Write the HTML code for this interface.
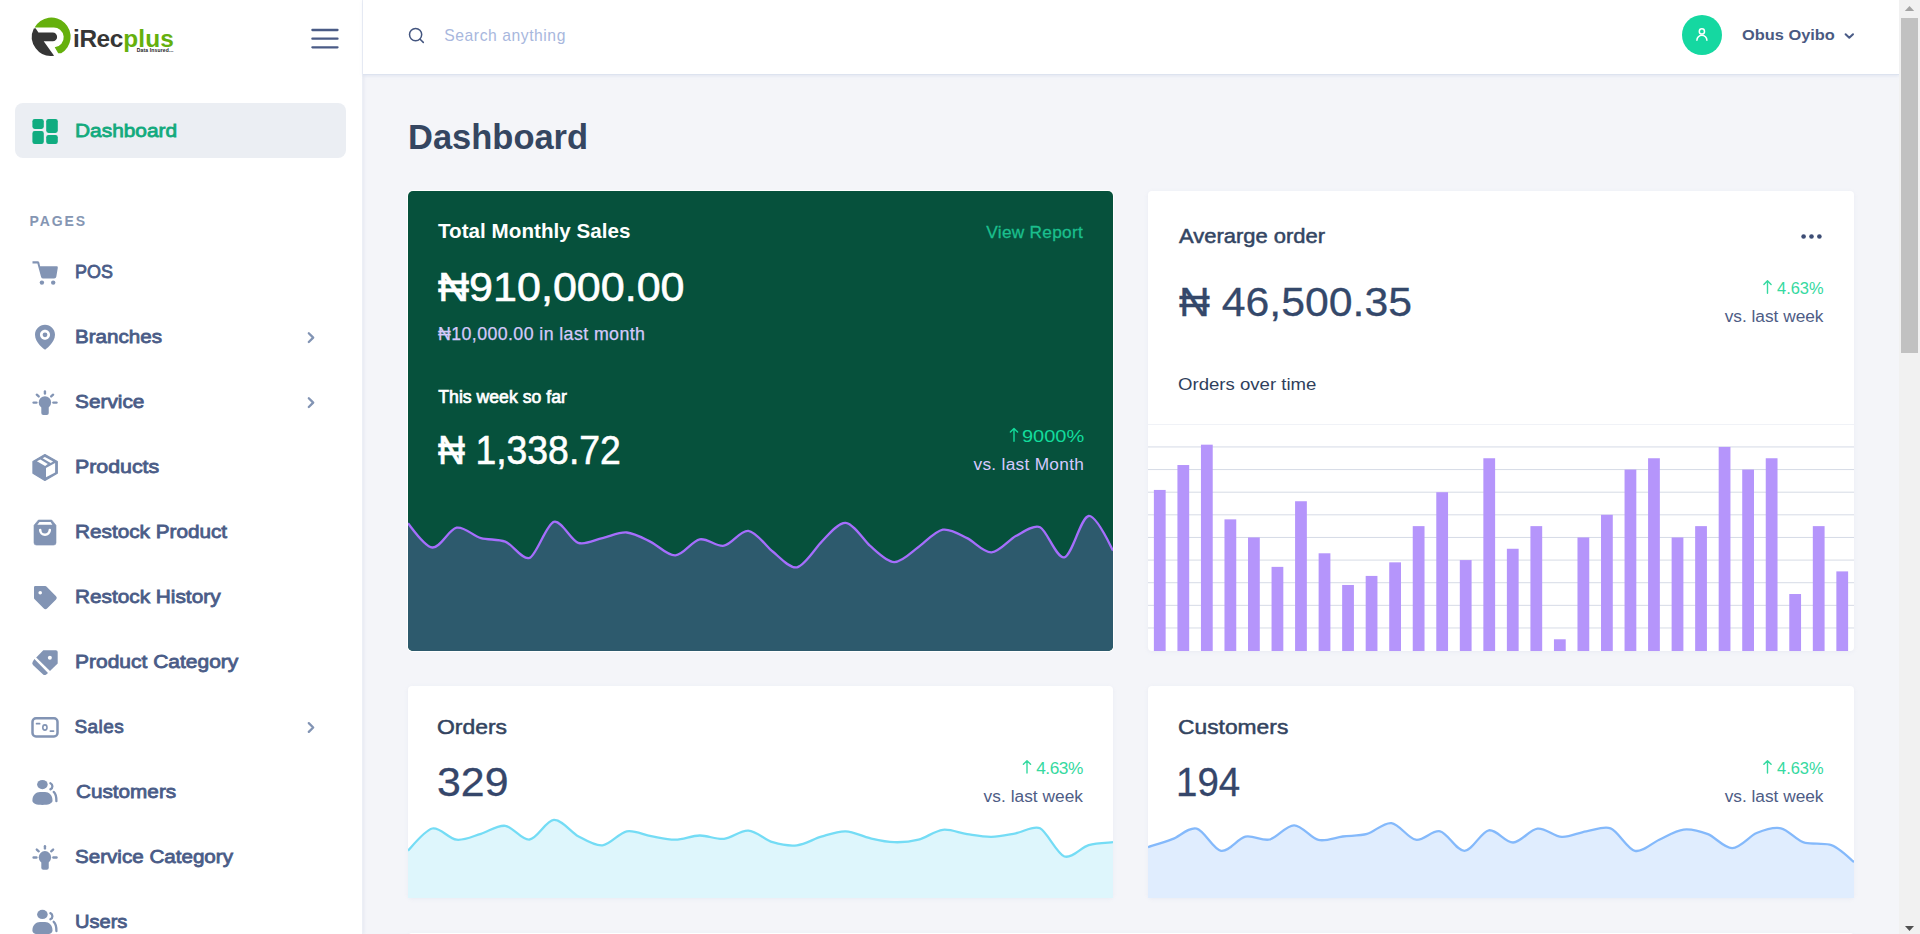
<!DOCTYPE html>
<html lang="en">
<head>
<meta charset="utf-8">
<title>iRecplus - Dashboard</title>
<style>
*{box-sizing:border-box;margin:0;padding:0}
html,body{width:1920px;height:934px;overflow:hidden}
body{font-family:"Liberation Sans",sans-serif;background:#f4f5f9;color:#334266;position:relative}
.abs{position:absolute}
.t{position:absolute;white-space:nowrap;line-height:1}
svg{position:absolute;left:0;top:0;overflow:visible}
#side{position:absolute;left:0;top:0;width:363px;height:934px;background:#fff;border-right:1px solid #eceff6;box-shadow:1px 0 3px rgba(170,182,212,.2)}
#top{position:absolute;left:363px;top:0;width:1536px;height:75px;background:#fff;border-bottom:1px solid #dde3ef;box-shadow:0 1px 3px rgba(190,200,225,.35)}
.active{position:absolute;left:15px;top:103px;width:331px;height:55px;border-radius:8px;background:#ebeef3}
.card{position:absolute;background:#fff;border-radius:4px;overflow:hidden;box-shadow:0 1px 4px rgba(150,160,195,.10)}
#sb{position:absolute;left:1899px;top:0;width:21px;height:934px;background:#f1f1f1}
#sb .th{position:absolute;left:2px;top:18px;width:17px;height:335px;background:#c1c1c1}
</style>
</head>
<body>
<!-- cards -->
<div class="card" style="left:408px;top:191px;width:705px;height:460px;background:#06513c;border-radius:5px;box-shadow:0 0 0 1px #fff"></div>
<div class="card" style="left:1148px;top:191px;width:706px;height:460px"></div>
<div class="card" style="left:408px;top:686px;width:705px;height:212px"></div>
<div class="card" style="left:1148px;top:686px;width:706px;height:212px"></div>
<div class="card" style="left:408px;top:933px;width:1446px;height:20px;border-radius:4px 4px 0 0"></div>

<!-- charts -->
<svg width="1920" height="934" viewBox="0 0 1920 934">
  <defs>
    <clipPath id="k1"><rect x="408" y="191" width="705" height="460" rx="5"/></clipPath>
    <clipPath id="k2"><rect x="1148" y="191" width="706" height="460" rx="4"/></clipPath>
    <clipPath id="k3"><rect x="408" y="686" width="705" height="212"/></clipPath>
    <clipPath id="k4"><rect x="1148" y="686" width="706" height="212"/></clipPath>
  </defs>
  <g clip-path="url(#k1)">
    <path d="M408.00,523.30C410.04,525.33 424.27,546.77 432.31,547.50S448.81,529.21 456.62,527.70S473.30,536.21 480.93,538.10S498.04,539.05 505.24,541.60S522.60,560.73 529.55,557.90S546.47,524.10 553.86,521.80S570.89,540.36 578.17,542.80S594.73,539.74 602.48,538.10S618.74,531.84 626.79,532.50S644.47,538.98 651.10,542.10S667.34,555.85 675.41,555.40S691.93,540.95 699.72,539.40S716.17,547.07 724.03,545.70S740.36,529.95 748.34,530.90S767.46,547.61 772.66,551.50S789.15,568.81 796.97,567.30S816.87,546.14 821.28,542.10S837.53,522.20 845.59,522.80S865.00,541.74 869.90,545.70S886.11,561.88 894.21,562.10S912.91,550.74 918.52,547.00S934.99,531.14 942.83,529.70S960.47,535.00 967.14,538.10S983.36,552.63 991.45,552.30S1009.36,539.40 1015.76,536.10S1033.27,524.22 1040.07,527.20S1056.68,559.17 1064.38,557.40S1080.75,517.13 1088.69,516.00S1111.66,548.59 1113.00,550.50L1113.00,652L408.00,652Z" fill="#2d5a6d"/>
    <path d="M408.00,523.30C410.04,525.33 424.27,546.77 432.31,547.50S448.81,529.21 456.62,527.70S473.30,536.21 480.93,538.10S498.04,539.05 505.24,541.60S522.60,560.73 529.55,557.90S546.47,524.10 553.86,521.80S570.89,540.36 578.17,542.80S594.73,539.74 602.48,538.10S618.74,531.84 626.79,532.50S644.47,538.98 651.10,542.10S667.34,555.85 675.41,555.40S691.93,540.95 699.72,539.40S716.17,547.07 724.03,545.70S740.36,529.95 748.34,530.90S767.46,547.61 772.66,551.50S789.15,568.81 796.97,567.30S816.87,546.14 821.28,542.10S837.53,522.20 845.59,522.80S865.00,541.74 869.90,545.70S886.11,561.88 894.21,562.10S912.91,550.74 918.52,547.00S934.99,531.14 942.83,529.70S960.47,535.00 967.14,538.10S983.36,552.63 991.45,552.30S1009.36,539.40 1015.76,536.10S1033.27,524.22 1040.07,527.20S1056.68,559.17 1064.38,557.40S1080.75,517.13 1088.69,516.00S1111.66,548.59 1113.00,550.50" fill="none" stroke="#a56efc" stroke-width="2.3"/>
  </g>
  <g clip-path="url(#k2)">
    <rect x="1148" y="424" width="706" height="1" fill="#f0f2f7"/>
    <g fill="#d6dbe6"><rect x="1148" y="446.43" width="706" height="1"/><rect x="1148" y="469.06" width="706" height="1"/><rect x="1148" y="491.69" width="706" height="1"/><rect x="1148" y="514.32" width="706" height="1"/><rect x="1148" y="536.95" width="706" height="1"/><rect x="1148" y="559.58" width="706" height="1"/><rect x="1148" y="582.21" width="706" height="1"/><rect x="1148" y="604.84" width="706" height="1"/><rect x="1148" y="627.47" width="706" height="1"/></g>
    <g fill="#b595fb"><rect x="1153.88" y="489.93" width="11.77" height="161.67"/><rect x="1177.42" y="465.03" width="11.77" height="186.57"/><rect x="1200.95" y="444.67" width="11.77" height="206.93"/><rect x="1224.48" y="519.35" width="11.77" height="132.25"/><rect x="1248.02" y="537.45" width="11.77" height="114.15"/><rect x="1271.55" y="566.87" width="11.77" height="84.73"/><rect x="1295.08" y="501.24" width="11.77" height="150.36"/><rect x="1318.62" y="553.29" width="11.77" height="98.31"/><rect x="1342.15" y="584.97" width="11.77" height="66.63"/><rect x="1365.68" y="575.92" width="11.77" height="75.68"/><rect x="1389.22" y="562.34" width="11.77" height="89.26"/><rect x="1412.75" y="526.13" width="11.77" height="125.46"/><rect x="1436.28" y="492.19" width="11.77" height="159.41"/><rect x="1459.82" y="560.08" width="11.77" height="91.52"/><rect x="1483.35" y="458.25" width="11.77" height="193.35"/><rect x="1506.88" y="548.76" width="11.77" height="102.83"/><rect x="1530.42" y="526.13" width="11.77" height="125.46"/><rect x="1553.95" y="639.28" width="11.77" height="12.31"/><rect x="1577.48" y="537.45" width="11.77" height="114.15"/><rect x="1601.02" y="514.82" width="11.77" height="136.78"/><rect x="1624.55" y="469.56" width="11.77" height="182.04"/><rect x="1648.08" y="458.25" width="11.77" height="193.35"/><rect x="1671.62" y="537.45" width="11.77" height="114.15"/><rect x="1695.15" y="526.13" width="11.77" height="125.46"/><rect x="1718.68" y="446.93" width="11.77" height="204.67"/><rect x="1742.22" y="469.56" width="11.77" height="182.04"/><rect x="1765.75" y="458.25" width="11.77" height="193.35"/><rect x="1789.28" y="594.02" width="11.77" height="57.57"/><rect x="1812.82" y="526.13" width="11.77" height="125.46"/><rect x="1836.35" y="571.39" width="11.77" height="80.20"/></g>
  </g>
  <g clip-path="url(#k3)">
    <path d="M408.00,850.60C410.22,848.58 424.59,830.23 432.31,828.50S448.61,838.83 456.62,839.70S473.44,835.94 480.93,833.80S497.25,824.86 505.24,825.80S521.57,840.47 529.55,839.50S545.80,820.45 553.86,819.90S571.81,832.87 578.17,836.20S594.46,846.11 602.48,845.30S618.96,832.77 626.79,831.30S643.23,834.84 651.10,836.20S667.31,839.82 675.41,839.70S691.62,835.63 699.72,835.50S716.01,839.71 724.03,838.90S740.28,830.05 748.34,830.60S765.23,839.96 772.66,842.20S788.96,846.21 796.97,845.30S813.79,838.85 821.28,836.70S837.49,831.05 845.59,831.30S862.18,836.47 869.90,838.20S886.11,841.95 894.21,842.20S910.91,841.64 918.52,839.70S934.83,830.71 942.83,829.80S959.20,833.04 967.14,834.20S983.35,837.05 991.45,836.90S1007.90,834.69 1015.76,833.30S1033.47,825.15 1040.07,828.30S1057.14,854.00 1064.38,856.50S1081.23,847.29 1088.69,845.10S1109.01,842.68 1113.00,842.20L1113.00,899L408.00,899Z" fill="#def6fc"/>
    <path d="M408.00,850.60C410.22,848.58 424.59,830.23 432.31,828.50S448.61,838.83 456.62,839.70S473.44,835.94 480.93,833.80S497.25,824.86 505.24,825.80S521.57,840.47 529.55,839.50S545.80,820.45 553.86,819.90S571.81,832.87 578.17,836.20S594.46,846.11 602.48,845.30S618.96,832.77 626.79,831.30S643.23,834.84 651.10,836.20S667.31,839.82 675.41,839.70S691.62,835.63 699.72,835.50S716.01,839.71 724.03,838.90S740.28,830.05 748.34,830.60S765.23,839.96 772.66,842.20S788.96,846.21 796.97,845.30S813.79,838.85 821.28,836.70S837.49,831.05 845.59,831.30S862.18,836.47 869.90,838.20S886.11,841.95 894.21,842.20S910.91,841.64 918.52,839.70S934.83,830.71 942.83,829.80S959.20,833.04 967.14,834.20S983.35,837.05 991.45,836.90S1007.90,834.69 1015.76,833.30S1033.47,825.15 1040.07,828.30S1057.14,854.00 1064.38,856.50S1081.23,847.29 1088.69,845.10S1109.01,842.68 1113.00,842.20" fill="none" stroke="#74dcf5" stroke-width="2.3"/>
  </g>
  <g clip-path="url(#k4)">
    <path d="M1148.00,847.10C1151.67,845.91 1165.25,841.89 1172.34,839.20S1189.01,826.77 1196.69,828.60S1213.14,849.49 1221.03,850.80S1237.68,838.49 1245.38,836.70S1262.03,841.30 1269.72,839.50S1285.95,825.23 1294.07,825.30S1310.71,838.13 1318.41,839.90S1334.77,837.49 1342.76,836.50S1359.56,835.98 1367.10,833.90S1383.45,822.15 1391.45,823.10S1407.90,838.37 1415.79,839.70S1432.42,829.54 1440.14,831.30S1456.37,850.97 1464.48,850.80S1480.94,831.64 1488.83,830.30S1505.07,842.78 1513.17,842.50S1529.51,829.52 1537.52,828.60S1553.77,836.45 1561.86,836.90S1578.27,832.48 1586.21,831.30S1603.27,825.84 1610.55,828.30S1627.20,849.00 1634.90,850.80S1652.42,842.67 1659.24,839.70S1675.57,830.51 1683.59,829.60S1700.84,831.51 1707.93,834.20S1724.17,848.30 1732.28,848.10S1749.66,835.83 1756.62,833.00S1773.17,826.72 1780.97,828.30S1797.34,841.82 1805.31,842.90S1821.74,843.34 1829.66,844.60S1851.31,860.08 1854.00,862.00L1854.00,899L1148.00,899Z" fill="#e0edfe"/>
    <path d="M1148.00,847.10C1151.67,845.91 1165.25,841.89 1172.34,839.20S1189.01,826.77 1196.69,828.60S1213.14,849.49 1221.03,850.80S1237.68,838.49 1245.38,836.70S1262.03,841.30 1269.72,839.50S1285.95,825.23 1294.07,825.30S1310.71,838.13 1318.41,839.90S1334.77,837.49 1342.76,836.50S1359.56,835.98 1367.10,833.90S1383.45,822.15 1391.45,823.10S1407.90,838.37 1415.79,839.70S1432.42,829.54 1440.14,831.30S1456.37,850.97 1464.48,850.80S1480.94,831.64 1488.83,830.30S1505.07,842.78 1513.17,842.50S1529.51,829.52 1537.52,828.60S1553.77,836.45 1561.86,836.90S1578.27,832.48 1586.21,831.30S1603.27,825.84 1610.55,828.30S1627.20,849.00 1634.90,850.80S1652.42,842.67 1659.24,839.70S1675.57,830.51 1683.59,829.60S1700.84,831.51 1707.93,834.20S1724.17,848.30 1732.28,848.10S1749.66,835.83 1756.62,833.00S1773.17,826.72 1780.97,828.30S1797.34,841.82 1805.31,842.90S1821.74,843.34 1829.66,844.60S1851.31,860.08 1854.00,862.00" fill="none" stroke="#84b9fb" stroke-width="2.3"/>
  </g>
</svg>

<div id="side">
  <div class="active"></div>
</div>
<div id="top"></div>

<!-- icons -->
<svg width="1920" height="934" viewBox="0 0 1920 934">

<!-- logo -->
<path d="M34.6 27.5A19.2 19.2 0 1 1 61.2 53.3L58.2 53.2L54.7 47.3A9.9 9.9 0 0 0 52.8 27.5Z" fill="#65b00d"/>
<path d="M33.8 28.4A19.2 19.2 0 0 0 54.1 55.7L43.7 41.2H52.8A4.3 4.3 0 0 0 52.8 32.6H38.4L35.6 28.2Z" fill="#363636"/>
<!-- hamburger -->
<g stroke="#4a5b86" stroke-width="2.3" stroke-linecap="round"><path d="M312.4 30H337.5"/><path d="M312.4 38.7H337.5"/><path d="M312.4 47.3H337.5"/></g>
<!-- dashboard icon -->
<g fill="#10ac80"><rect x="32.4" y="118.9" width="11.4" height="10" rx="2.3"/><rect x="46.2" y="118.9" width="11.6" height="14" rx="2.3"/><rect x="32.4" y="131.1" width="11.4" height="12.9" rx="2.3"/><rect x="46.2" y="134.9" width="11.6" height="9.1" rx="2.3"/></g>
<!-- cart -->
<g fill="#8294b4"><path d="M32.5 261.2H37.6A1.8 1.8 0 0 1 39.3 262.5L40.1 266.3H56.6A1.2 1.2 0 0 1 57.8 267.7L56.3 276.8A2.2 2.2 0 0 1 54.1 278.6H43.3A2.2 2.2 0 0 1 41.1 276.9L37.4 263.6H32.5Z"/><circle cx="41.9" cy="282.6" r="2.2"/><circle cx="53.2" cy="282.6" r="2.2"/></g>
<!-- map pin -->
<g transform="translate(30 322.25) scale(1.25)" fill="#8294b4"><path fill-rule="evenodd" d="M12 2C7.589 2 4 5.589 4 9.995 3.971 16.44 11.696 21.784 12 22c0 0 8.029-5.56 8-12 0-4.411-3.589-8-8-8zm0 12c-2.21 0-4-1.79-4-4s1.79-4 4-4 4 1.79 4 4-1.79 4-4 4z"/><circle cx="12" cy="10" r="1.9"/></g>
<g transform="translate(0 0.00)" fill="#8294b4" stroke="#8294b4" stroke-linecap="round">
  <circle cx="44.93" cy="402.4" r="6.2" stroke="none"/>
  <path d="M41.3 404V412.9A2 2 0 0 0 43.3 414.9H46.75A2 2 0 0 0 48.75 412.9V404Z" stroke="none"/>
  <g stroke-width="2.4" fill="none"><path d="M44.93 391.4V393.5"/><path d="M36.8 394.7L38.7 396.4"/><path d="M53.1 394.7L51.2 396.4"/><path d="M33.6 402.6H36.4"/><path d="M53.4 402.6H56.5"/></g>
</g>
<!-- box -->
<g><path d="M44.9 454.6L57.3 461.5V473.2L44.9 480.5L32.95 473.2V461.5Z" fill="#8294b4" stroke="#8294b4" stroke-width="1.2" stroke-linejoin="round"/><path d="M46 467.9L55.1 463.1V472.6L46 477.3Z" fill="#fff"/><path d="M36.9 461.3L40.4 459.6L47.8 464L45.1 466Z" fill="#fff"/><path d="M42.6 458.2L44.9 456.9L53.1 461.6L50.6 463.1Z" fill="#fff"/></g>
<!-- bag -->
<g fill="#8294b4"><path d="M38.4 520H51.7L56 525.3V542.6A2.5 2.5 0 0 1 53.5 545.1H36.5A2.5 2.5 0 0 1 34 542.6V525.3Z" stroke="#8294b4" stroke-width="0.6" stroke-linejoin="round"/><path d="M39.5 522H50.6L52.4 524.7H37.3Z" fill="#fff"/><path d="M40.2 530A4.8 4.8 0 0 0 49.8 530" fill="none" stroke="#fff" stroke-width="2.5" stroke-linecap="round"/></g>
<!-- tag -->
<g><path d="M35.2 586.1H45.3A1.5 1.5 0 0 1 46.4 586.6L55.8 596A2.6 2.6 0 0 1 55.8 599.7L47.3 608.2A2.6 2.6 0 0 1 43.6 608.2L34.4 599A1.5 1.5 0 0 1 34 598V587.3A1.2 1.2 0 0 1 35.2 586.1Z" fill="#8294b4"/><circle cx="40.2" cy="592.8" r="1.8" fill="#fff"/></g>
<!-- product category tag -->
<g fill="#8294b4"><path d="M43.3 650.2H55.9A1.8 1.8 0 0 1 57.7 652V663.5L50 671.1L36.2 657.5Z"/><path d="M34.4 659.1L48 672.9C46.5 674.6 45 675.4 43.4 674.7L33.2 665.2A2.6 2.6 0 0 1 32.6 662Z"/><circle cx="49.85" cy="657.65" r="2" fill="#fff"/></g>
<!-- money -->
<g fill="none" stroke="#8294b4"><rect x="32.5" y="718.3" width="25" height="18.2" rx="3.5" stroke-width="2.5"/><ellipse cx="44.9" cy="727.5" rx="2.1" ry="2.6" stroke-width="1.6"/><path d="M36.6 723.7H39.6M50.4 731.1H53.5" stroke-width="1.8" stroke-linecap="round"/></g>
<g transform="translate(0 0.00)" fill="#8294b4">
  <ellipse cx="42.4" cy="784.55" rx="5.3" ry="4.6"/>
  <path d="M32.4 800.5C32.4 795 36 792 40 792H45C49 792 52.5 795 52.5 800.5C52.5 803.8 48 804.9 42.4 804.9S32.4 803.8 32.4 800.5Z"/>
  <g fill="none" stroke="#8294b4" stroke-width="2.3" stroke-linecap="round"><path d="M50.4 783.2A3.4 3.4 0 0 1 50.4 789.4"/><path d="M53.7 791.9C55.8 793.8 56.5 797 56.4 801.2"/></g>
</g>
<g transform="translate(0 454.90)" fill="#8294b4" stroke="#8294b4" stroke-linecap="round">
  <circle cx="44.93" cy="402.4" r="6.2" stroke="none"/>
  <path d="M41.3 404V412.9A2 2 0 0 0 43.3 414.9H46.75A2 2 0 0 0 48.75 412.9V404Z" stroke="none"/>
  <g stroke-width="2.4" fill="none"><path d="M44.93 391.4V393.5"/><path d="M36.8 394.7L38.7 396.4"/><path d="M53.1 394.7L51.2 396.4"/><path d="M33.6 402.6H36.4"/><path d="M53.4 402.6H56.5"/></g>
</g>
<g transform="translate(0 129.90)" fill="#8294b4">
  <ellipse cx="42.4" cy="784.55" rx="5.3" ry="4.6"/>
  <path d="M32.4 800.5C32.4 795 36 792 40 792H45C49 792 52.5 795 52.5 800.5C52.5 803.8 48 804.9 42.4 804.9S32.4 803.8 32.4 800.5Z"/>
  <g fill="none" stroke="#8294b4" stroke-width="2.3" stroke-linecap="round"><path d="M50.4 783.2A3.4 3.4 0 0 1 50.4 789.4"/><path d="M53.7 791.9C55.8 793.8 56.5 797 56.4 801.2"/></g>
</g>
<path d="M308.8 333.2L313.2 337.6L308.8 342.0" fill="none" stroke="#8294b4" stroke-width="2.3" stroke-linecap="round" stroke-linejoin="round"/><path d="M308.8 398.2L313.2 402.6L308.8 407.0" fill="none" stroke="#8294b4" stroke-width="2.3" stroke-linecap="round" stroke-linejoin="round"/><path d="M308.8 723.1L313.2 727.5L308.8 731.9" fill="none" stroke="#8294b4" stroke-width="2.3" stroke-linecap="round" stroke-linejoin="round"/>
<!-- search -->
<g fill="none" stroke="#43557f" stroke-width="1.5" stroke-linecap="round"><circle cx="415.6" cy="34.6" r="6.1"/><path d="M420.1 39.2L423.3 42.4"/></g>
<!-- avatar -->
<circle cx="1702" cy="35" r="20" fill="#15d8a1"/>
<g fill="none" stroke="#fff" stroke-width="1.5" stroke-linecap="round"><circle cx="1701.9" cy="31.4" r="2.6"/><path d="M1696.9 40.2A5 5 0 0 1 1706.9 40.2"/></g>
<path d="M1845.6 34.2L1849.3 37.8L1853 34.2" fill="none" stroke="#4a5b86" stroke-width="2" stroke-linecap="round" stroke-linejoin="round"/>
<!-- dots -->
<g fill="#3d4d75"><circle cx="1803.6" cy="236.5" r="2.3"/><circle cx="1811.5" cy="236.5" r="2.3"/><circle cx="1819.4" cy="236.5" r="2.3"/></g>
<path d="M1014.0 441.2V428.4M1010.4 432.0L1014.0 428.4L1017.6 432.0" fill="none" stroke="#13dc9c" stroke-width="1.4" stroke-linecap="round" stroke-linejoin="round"/>
<path d="M1767.5 293.2V280.8M1763.9 284.4L1767.5 280.8L1771.1 284.4" fill="none" stroke="#35d9a0" stroke-width="1.4" stroke-linecap="round" stroke-linejoin="round"/>
<path d="M1027.0 773.0V760.7M1023.4 764.3L1027.0 760.7L1030.6 764.3" fill="none" stroke="#35d9a0" stroke-width="1.4" stroke-linecap="round" stroke-linejoin="round"/>
<path d="M1767.5 773.0V760.7M1763.9 764.3L1767.5 760.7L1771.1 764.3" fill="none" stroke="#35d9a0" stroke-width="1.4" stroke-linecap="round" stroke-linejoin="round"/>

</svg>

<!-- text -->
<div class="t" style="left:74.50px;top:121px;font-size:19px;color:#12aa7d;transform:scaleX(1.0989);transform-origin:0 0;-webkit-text-stroke:0.8px #12aa7d;">Dashboard</div>
<div class="t" style="left:29.60px;top:214px;font-size:14px;color:#8596b3;letter-spacing:1.9px;font-weight:bold;">PAGES</div>
<div class="t" style="left:74.50px;top:262px;font-size:19px;color:#4a5c87;transform:scaleX(0.9436);transform-origin:0 0;-webkit-text-stroke:0.8px #4a5c87;">POS</div>
<div class="t" style="left:74.50px;top:327px;font-size:19px;color:#4a5c87;transform:scaleX(1.0835);transform-origin:0 0;-webkit-text-stroke:0.8px #4a5c87;">Branches</div>
<div class="t" style="left:74.50px;top:392px;font-size:19px;color:#4a5c87;transform:scaleX(1.0952);transform-origin:0 0;-webkit-text-stroke:0.8px #4a5c87;">Service</div>
<div class="t" style="left:74.50px;top:457px;font-size:19px;color:#4a5c87;transform:scaleX(1.1230);transform-origin:0 0;-webkit-text-stroke:0.8px #4a5c87;">Products</div>
<div class="t" style="left:74.50px;top:522px;font-size:19px;color:#4a5c87;transform:scaleX(1.0914);transform-origin:0 0;-webkit-text-stroke:0.8px #4a5c87;">Restock Product</div>
<div class="t" style="left:74.50px;top:587px;font-size:19px;color:#4a5c87;transform:scaleX(1.0939);transform-origin:0 0;-webkit-text-stroke:0.8px #4a5c87;">Restock History</div>
<div class="t" style="left:74.50px;top:652px;font-size:19px;color:#4a5c87;transform:scaleX(1.1048);transform-origin:0 0;-webkit-text-stroke:0.8px #4a5c87;">Product Category</div>
<div class="t" style="left:74.50px;top:717px;font-size:19px;color:#4a5c87;letter-spacing:0.4px;-webkit-text-stroke:0.8px #4a5c87;">Sales</div>
<div class="t" style="left:75.50px;top:782px;font-size:19px;color:#4a5c87;transform:scaleX(1.0902);transform-origin:0 0;-webkit-text-stroke:0.8px #4a5c87;">Customers</div>
<div class="t" style="left:74.50px;top:847px;font-size:19px;color:#4a5c87;transform:scaleX(1.0841);transform-origin:0 0;-webkit-text-stroke:0.8px #4a5c87;">Service Category</div>
<div class="t" style="left:74.60px;top:912px;font-size:19px;color:#4a5c87;transform:scaleX(1.0552);transform-origin:0 0;-webkit-text-stroke:0.8px #4a5c87;">Users</div>
<div class="t" style="left:444.30px;top:28px;font-size:15.7px;color:#a8b7dd;letter-spacing:0.55px;">Search anything</div>
<div class="t" style="left:1741.75px;top:27px;font-size:15.2px;color:#4a5a82;transform:scaleX(1.0782);transform-origin:0 0;font-weight:bold;">Obus Oyibo</div>
<div class="t" style="left:407.70px;top:120px;font-size:35.5px;color:#354661;transform:scaleX(0.9713);transform-origin:0 0;font-weight:bold;">Dashboard</div>
<div class="t" style="left:438.00px;top:221px;font-size:20.6px;color:#ffffff;letter-spacing:0.04px;font-weight:bold;">Total Monthly Sales</div>
<div class="t" style="left:986.30px;top:224px;font-size:17.3px;color:#1bbf8d;letter-spacing:0.27px;-webkit-text-stroke:0.3px #1bbf8d;">View Report</div>
<div class="t" style="left:438.00px;top:267px;font-size:41px;color:#ffffff;transform:scaleX(1.0500);transform-origin:0 0;-webkit-text-stroke:0.6px #ffffff;">₦910,000.00</div>
<div class="t" style="left:438.00px;top:326px;font-size:17.8px;color:#d5c9fb;letter-spacing:0.4px;-webkit-text-stroke:0.25px #d5c9fb;">₦10,000.00 in last month</div>
<div class="t" style="left:438.30px;top:389px;font-size:17.6px;color:#ffffff;letter-spacing:0.03px;-webkit-text-stroke:0.7px #ffffff;">This week so far</div>
<div class="t" style="left:438.30px;top:430px;font-size:41px;color:#ffffff;transform:scaleX(0.9116);transform-origin:0 0;-webkit-text-stroke:0.6px #ffffff;">₦ 1,338.72</div>
<div class="t" style="left:1022.20px;top:428px;font-size:17.3px;color:#13dc9c;transform:scaleX(1.1558);transform-origin:0 0;">9000%</div>
<div class="t" style="left:973.50px;top:456px;font-size:17.3px;color:#d6c9ff;letter-spacing:0.29px;">vs. last Month</div>
<div class="t" style="left:1178.80px;top:226px;font-size:20.4px;color:#334563;transform:scaleX(1.0772);transform-origin:0 0;-webkit-text-stroke:0.5px #334563;">Averarge order</div>
<div class="t" style="left:1178.80px;top:282px;font-size:41px;color:#34486a;transform:scaleX(1.0432);transform-origin:0 0;-webkit-text-stroke:0.3px #34486a;">₦ 46,500.35</div>
<div class="t" style="left:1777.00px;top:280px;font-size:17.3px;color:#35d9a0;transform:scaleX(0.9510);transform-origin:0 0;">4.63%</div>
<div class="t" style="left:1724.70px;top:308px;font-size:17.3px;color:#4e5c85;letter-spacing:-0.01px;">vs. last week</div>
<div class="t" style="left:1177.80px;top:376px;font-size:17.2px;color:#2f3f5c;transform:scaleX(1.0810);transform-origin:0 0;">Orders over time</div>
<div class="t" style="left:437.00px;top:717px;font-size:20.8px;color:#33445f;transform:scaleX(1.1016);transform-origin:0 0;-webkit-text-stroke:0.5px #33445f;">Orders</div>
<div class="t" style="left:437.00px;top:762px;font-size:41px;color:#35466a;transform:scaleX(1.0455);transform-origin:0 0;-webkit-text-stroke:0.3px #35466a;">329</div>
<div class="t" style="left:1036.20px;top:760px;font-size:17.3px;color:#35d9a0;letter-spacing:-0.48px;">4.63%</div>
<div class="t" style="left:983.60px;top:788px;font-size:17.3px;color:#4e5c85;letter-spacing:0.04px;">vs. last week</div>
<div class="t" style="left:1178.00px;top:717px;font-size:20.8px;color:#33445f;transform:scaleX(1.0970);transform-origin:0 0;-webkit-text-stroke:0.5px #33445f;">Customers</div>
<div class="t" style="left:1176.30px;top:762px;font-size:41px;color:#35466a;transform:scaleX(0.9385);transform-origin:0 0;-webkit-text-stroke:0.3px #35466a;">194</div>
<div class="t" style="left:1777.00px;top:760px;font-size:17.3px;color:#35d9a0;transform:scaleX(0.9510);transform-origin:0 0;">4.63%</div>
<div class="t" style="left:1724.70px;top:788px;font-size:17.3px;color:#4e5c85;letter-spacing:-0.01px;">vs. last week</div>
<div class="t" style="left:73.00px;top:27px;font-size:24.4px;color:#363636;letter-spacing:-0.4px;font-weight:bold;">iRec</div>
<div class="t" style="left:123.30px;top:27px;font-size:24.4px;color:#65b00d;letter-spacing:0.13px;font-weight:bold;">plus</div>
<div class="t" style="left:136.80px;top:48px;font-size:5px;color:#222222;letter-spacing:0.16px;font-weight:bold;">Data Insured...</div>


<div id="sb"><div class="th"></div>
<svg width="21" height="934" viewBox="0 0 21 934"><path d="M5.8 10.9L10.5 5.9L15.2 10.9Z" fill="#a3a3a3"/><path d="M6 926L15 926L10.5 931Z" fill="#505050"/></svg>
</div>
</body>
</html>
